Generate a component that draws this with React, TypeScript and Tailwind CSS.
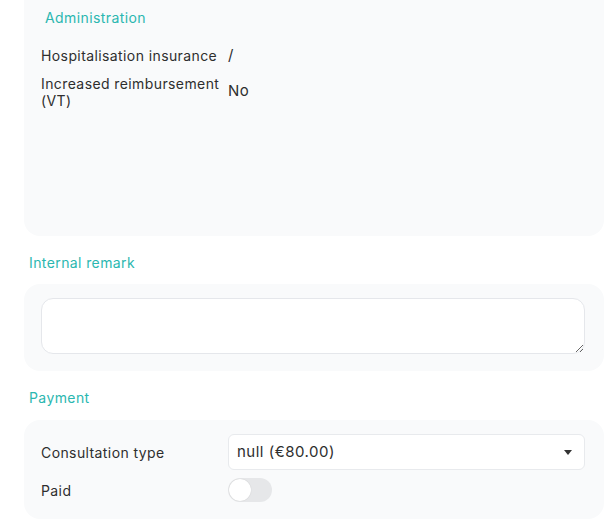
const Row = ({ label, value }: { label: React.ReactNode; value: string }) => (
  <div className="flex items-center">
    <div className="w-[187px] pr-2 leading-[17px]">{label}</div>
    <div className="text-[15px]">{value}</div>
  </div>
);

const App = () => {
  return (
    <div className="min-h-[524px] bg-white pl-6 pr-[3px] text-[14px] tracking-[0.4px] text-[#2e2e2e] font-['Inter',sans-serif]">
      {/* Administration */}
      <div className="h-[236px] rounded-b-2xl bg-[#f9fafb] px-[17px]">
        <div className="pt-[9px] pl-1 text-[#2bb7b0] leading-[18px]">Administration</div>
        <div className="mt-[17px] flex flex-col gap-[8px]">
          <Row label="Hospitalisation insurance" value="/" />
          <Row label={<>Increased reimbursement<br />(VT)</>} value="No" />
        </div>
      </div>

      {/* Internal remark */}
      <div className="mt-[18px] pl-[5px] text-[#2bb7b0] leading-[18px]">Internal remark</div>
      <div className="mt-[12px] rounded-2xl bg-[#f9fafb] px-[17px] pr-[19px] pt-[14px] pb-[17px]">
        <textarea className="block h-[56px] w-full resize-y rounded-xl border border-[#e5e7eb] bg-white px-3 py-2 outline-none" />
      </div>

      {/* Payment */}
      <div className="mt-[18px] pl-[5px] text-[#2bb7b0] leading-[18px]">Payment</div>
      <div className="mt-[13px] rounded-2xl bg-[#f9fafb] px-[17px] pr-[19px] pt-[14px] pb-[17px]">
        <div className="flex items-center">
          <div className="w-[187px]">Consultation type</div>
          <div className="flex h-[36px] flex-1 items-center justify-between rounded-md border border-[#e8eaed] bg-white pl-2 pr-3 text-[15px] tracking-[0.5px]">
            <span>null (€80.00)</span>
            <svg width="8" height="5" viewBox="0 0 8 5"><path d="M0 0h8L4 5z" fill="#333" /></svg>
          </div>
        </div>
        <div className="mt-[8px] flex items-center">
          <div className="w-[187px]">Paid</div>
          <div className="relative h-[24px] w-[44px] rounded-full bg-[#e6e7e9]">
            <div className="absolute left-[1px] top-[1px] h-[22px] w-[22px] rounded-full bg-white shadow-[0_0_1px_rgba(0,0,0,0.2)]" />
          </div>
        </div>
      </div>
    </div>
  );
};

export default App;
